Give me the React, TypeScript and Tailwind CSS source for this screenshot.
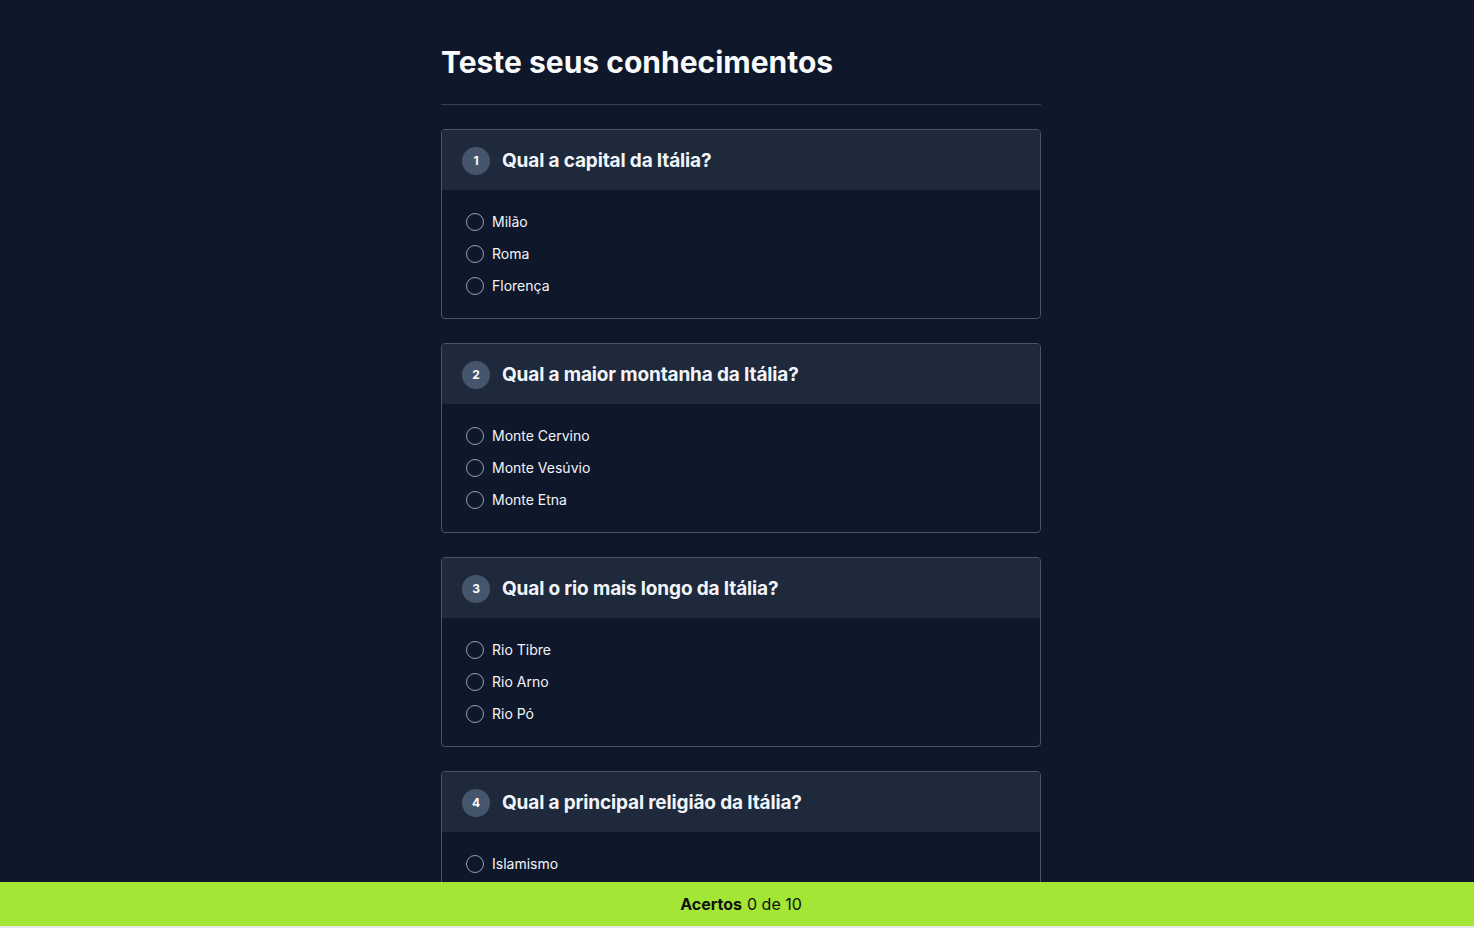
import { useState } from 'react';

interface Question {
  id: number;
  title: string;
  options: string[];
  answer: number;
}

const questions: Question[] = [
  { id: 1, title: 'Qual a capital da Itália?', options: ['Milão', 'Roma', 'Florença'], answer: 1 },
  { id: 2, title: 'Qual a maior montanha da Itália?', options: ['Monte Cervino', 'Monte Vesúvio', 'Monte Etna'], answer: 0 },
  { id: 3, title: 'Qual o rio mais longo da Itália?', options: ['Rio Tibre', 'Rio Arno', 'Rio Pó'], answer: 2 },
  { id: 4, title: 'Qual a principal religião da Itália?', options: ['Islamismo', 'Catolicismo', 'Judaísmo'], answer: 1 },
  { id: 5, title: 'Qual o prato mais famoso da Itália?', options: ['Pizza', 'Sushi', 'Tacos'], answer: 0 },
  { id: 6, title: 'Qual a moeda oficial da Itália?', options: ['Lira', 'Euro', 'Dólar'], answer: 1 },
  { id: 7, title: 'Qual o idioma oficial da Itália?', options: ['Italiano', 'Latim', 'Francês'], answer: 0 },
  { id: 8, title: 'Qual cidade é famosa pelos canais?', options: ['Nápoles', 'Turim', 'Veneza'], answer: 2 },
  { id: 9, title: 'Qual a ilha mais populosa da Itália?', options: ['Sardenha', 'Sicília', 'Capri'], answer: 1 },
  { id: 10, title: 'Qual o time de futebol de Turim?', options: ['Juventus', 'Milan', 'Roma'], answer: 0 },
];

export default function App() {
  const [answers, setAnswers] = useState<Record<number, number>>({});

  const hits = questions.filter((q) => answers[q.id] === q.answer).length;

  return (
    <div className="min-h-screen bg-[#0f172a] text-slate-100 font-['Inter',sans-serif] pl-2 pb-24">
      <div className="mx-auto w-[600px] pt-[44px]">
        <h1 className="text-3xl leading-9 font-bold text-slate-50">Teste seus conhecimentos</h1>
        <div className="mt-6 border-b border-slate-700" />

        <div className="mt-6 flex flex-col gap-6">
          {questions.map((q) => (
            <div key={q.id} className="rounded border border-slate-600 overflow-hidden">
              <div className="h-[60px] bg-[#1e293b] flex items-center gap-3 px-5 pt-px">
                <span className="w-7 h-7 rounded-full bg-slate-600 flex items-center justify-center text-xs font-bold text-white">
                  {q.id}
                </span>
                <h2 className="text-[19px] leading-7 font-bold text-slate-100 tracking-[-0.15px]">{q.title}</h2>
              </div>
              <div className="py-4 px-6">
                {q.options.map((opt, i) => (
                  <label key={opt} className="h-8 flex items-center gap-2 text-sm text-slate-100 cursor-pointer">
                    <button
                      type="button"
                      onClick={() => setAnswers({ ...answers, [q.id]: i })}
                      className="w-[18px] h-[18px] rounded-full border-[1.5px] border-slate-400 flex items-center justify-center"
                    >
                      {answers[q.id] === i && <span className="w-2 h-2 rounded-full bg-lime-400" />}
                    </button>
                    <span>{opt}</span>
                  </label>
                ))}
              </div>
            </div>
          ))}
        </div>
      </div>

      {/* Score bar */}
      <div className="fixed left-0 right-0 bottom-0 h-[46px] bg-[#a3e635] border-b-2 border-gray-200 flex items-center justify-center pl-2 text-base text-[#111]">
        <span className="font-bold">Acertos</span>
        <span className="ml-[5px]">{hits} de {questions.length}</span>
      </div>
    </div>
  );
}
